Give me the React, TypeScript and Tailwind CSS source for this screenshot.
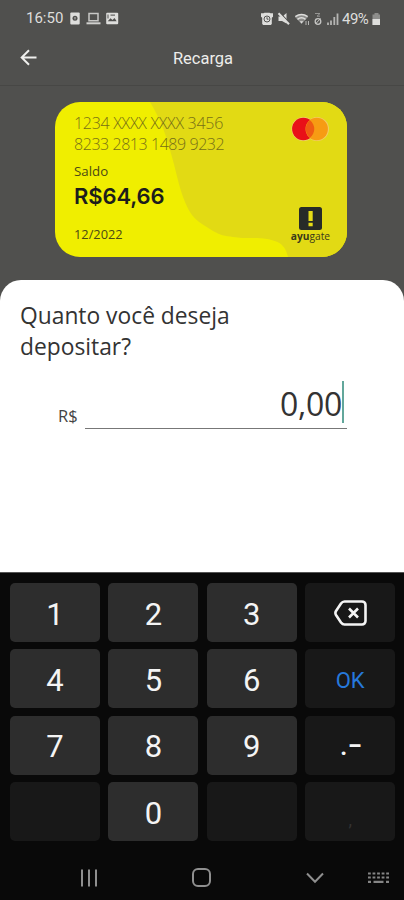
import { clsx } from "clsx";

const KEYS = [
  ["1", "2", "3", "back"],
  ["4", "5", "6", "OK"],
  ["7", "8", "9", ".–"],
  ["", "0", "", ","],
];

const StatusBar = () => (
  <div className="flex h-[37px] items-center pl-[26px] pr-[23px] text-[#dededc]">
    <span className="w-[37px] whitespace-nowrap font-['Roboto',sans-serif] text-[15px] leading-none">16:50</span>
    {/* Notifications */}
    <svg className="ml-[7px]" width="50" height="14" viewBox="0 0 50 14" fill="none">
      <rect x="0.3" y="0.5" width="9.4" height="12" rx="1" fill="currentColor" />
      <circle cx="5" cy="6.2" r="2.5" fill="#50504e" />
      <path d="M5 5v2.4" stroke="#c5c5c3" />
      <path d="M19 1.5h9v7.300h-9z" stroke="#c8c8c6" strokeWidth="1.5" />
      <path d="M16.500 11.300h14" stroke="#d0d0ce" strokeWidth="2" />
      <rect x="36.2" y="0.8" width="12" height="11.4" rx="1" fill="currentColor" />
      <path d="M37.700 9.300l2.800-3 2 1.800 2-2 2.200 3.200z" fill="#50504e" />
      <path d="M38 2.500v4M40.500 3.200h4.500" stroke="#686866" strokeWidth="1.2" />
    </svg>
    <svg className="ml-auto" width="80" height="14" viewBox="0 0 80 14" fill="none">
      {/* Alarm */}
      <path d="M0 1.300h2.500l1-.5h5l1 .5H12v3.500l-1.200 1V12l-1 1H2.200l-1-1V5.800L0 4.800z" fill="currentColor" />
      <circle cx="6" cy="7" r="3" stroke="#555553" />
      <path d="M6 5.200V7.200H7.500" stroke="#555553" />
      {/* Muted speaker */}
      <path d="M17.500 4.500h4l4-3.500v10.500L21 9h-3.500z" fill="currentColor" />
      <path d="M18.800.3l10 11.200" stroke="#50504e" strokeWidth="1.200" />
      <path d="M17.500 1.300l10.500 11" stroke="currentColor" strokeWidth="2" />
      {/* Wifi */}
      <path d="M34 5q6.500-5 13 0l-6.500 7z" fill="#8b8b89" />
      <path d="M34.300 4.700q6.200-4.500 12.400 0M36.500 7.300q4-3 8 0" stroke="#dededc" strokeWidth="1.500" />
      <path d="M38.800 9.200h3.500l-1.800 2.300z" fill="currentColor" />
      <path d="M45 9v4M47.500 9v4" stroke="#b5b5b3" />
      {/* Data */}
      <path d="M54 1.500h5l-3 2.700h3" stroke="#969694" />
      <circle cx="57" cy="9.500" r="2.800" stroke="#c5c5c3" strokeWidth="1.300" />
      <path d="M54.500 12l5-5.500" stroke="#c5c5c3" />
      {/* Signal */}
      <path d="M67 10.500V13M70 8.500V13" stroke="#c8c8c6" strokeWidth="1.500" />
      <path d="M73.300 5v8M76.500 1.500V13" stroke="#b5b5b3" strokeWidth="1.800" />
    </svg>
    <span className="ml-px w-[30px] whitespace-nowrap pt-px font-['Roboto',sans-serif] text-[15px] leading-none tracking-[-0.5px]">49%</span>
    <svg width="9" height="14" viewBox="0 0 9 14">
      <path d="M2.500 1h4v1.500H8V13H.5V2.500h2z" fill="#8e8e8c" />
      <path d="M.5 7H8V13H.5z" fill="currentColor" />
    </svg>
  </div>
);

const Card = () => (
  <div className="relative ml-[55px] h-[155px] w-[292px] overflow-hidden rounded-[25px] bg-[#f0ee00]">
    <svg className="absolute inset-0" width="292" height="155" viewBox="0 0 292 155">
      <path
        d="M95 0c9 15 15 29 20 48 6 20 9 38 15 52 4 10 9 17 17 22l11 7c7 4 12 5 20 6 12 2 24 0 34 2 10 2 18 4 21 18h59V0z"
        fill="#e2da14"
      />
    </svg>
    <div className="relative flex h-full justify-between pl-[19px] pr-[17px]">
      <div className="flex flex-col whitespace-nowrap font-['Open_Sans',sans-serif] text-[#4c4914]">
        <span className="mt-[11px] text-[16px] font-light leading-[21px] tracking-[-0.28px] text-[#777016]">1234 XXXX XXXX 3456</span>
        <span className="text-[16px] font-light leading-[21px] tracking-[-0.44px] text-[#777016]">8233 2813 1489 9232</span>
        <span className="mt-[7px] text-[13.3px] leading-[18px]">Saldo</span>
        <span className="mt-[2px] font-['Inter',sans-serif] text-[22px] font-semibold leading-[28px] tracking-[-0.1px] text-[#1c1d1b]">R$64,66</span>
        <span className="mt-[15px] text-[12.8px] leading-[18px]">12/2022</span>
      </div>
      <div className="flex flex-col items-center">
        <svg className="mt-[14px]" width="38" height="26" viewBox="0 0 38 26">
          <circle cx="12.500" cy="13" r="12" fill="#edd16c" />
          <circle cx="26" cy="13" r="12" fill="#f2cc64" />
          <circle cx="12.300" cy="13" r="11.200" fill="#e91018" />
          <circle cx="25.700" cy="13" r="11.200" fill="#f79b13" />
          <path d="M19 4.300a11 11 0 0 1 0 17.400a11 11 0 0 1 0-17.400z" fill="#ef5b12" />
        </svg>
        <svg className="mt-[65px]" width="23" height="23" viewBox="0 0 23 23">
          <rect width="23" height="23" rx="2.500" fill="#272b28" />
          <path d="M9.500 4h4.200v10H9.500z" fill="#e6dd16" />
          <path d="M9.500 15.700h4.200v3.600H9.500z" fill="#e6dd16" />
        </svg>
        <span className="font-['Open_Sans',sans-serif] text-[10.2px] leading-[13px] text-[#39391b]">
          <b>ayu</b>gate
        </span>
      </div>
    </div>
  </div>
);

const Backspace = () => (
  <svg width="33" height="26" viewBox="0 0 33 26" fill="none" stroke="#f4f4f4" strokeWidth="2.600" strokeLinejoin="round">
    <path d="M10.500 1.500H28a3.500 3.500 0 0 1 3.500 3.500v16a3.500 3.500 0 0 1-3.500 3.500H10.500Q8.500 24.500 7 22.500L2 15q-1.200-2 0-4L7 3.500Q8.500 1.500 10.500 1.500z" />
    <path d="M15 8.500l9 9M24 8.500l-9 9" />
  </svg>
);

const KeyLabel = ({ label }: { label: string }) => {
  if (label === "back") return <Backspace />;
  if (label === "OK") return <span className="pt-[4px] text-[22px] text-[#2678db]">OK</span>;
  if (label === ".–")
    return (
      <span className="flex items-baseline pt-[3px] text-[27px] font-medium">
        .<span className="ml-[1px] w-[12px] origin-left scale-x-80">–</span>
      </span>
    );
  if (label === ",") return <span className="pt-[17px] text-[18px] text-[#333]">,</span>;
  return <span className="text-[31px]">{label}</span>;
};

const Keyboard = () => (
  <div className="h-[328px] border-t border-[#555] bg-[#090909] px-[10px] pt-[10px] font-['Roboto',sans-serif] leading-none text-[#f4f4f4]">
    <div className="grid grid-cols-[90px_90px_90px_90px] grid-rows-[59px_59px_59px_59px] gap-x-[8.4px] gap-y-[7.4px]">
      {KEYS.flat().map((label, i) => (
        <button
          key={i}
          className={clsx(
            "flex items-center justify-center rounded-[5px]",
            /^\d$/.test(label) ? "bg-[#2d2d2d] pt-[3px]" : "bg-[#181818]"
          )}
        >
          <KeyLabel label={label} />
        </button>
      ))}
    </div>
    {/* Navigation bar */}
    <div className="flex h-[73px] items-center pl-[71px] text-[#8f8f8f]">
      <svg width="16" height="18" viewBox="0 0 16 18" stroke="currentColor" strokeWidth="2">
        <path d="M1 .5v17M8 .5v17M15 .5v17" />
      </svg>
      <svg className="ml-[95px]" width="19" height="19" viewBox="0 0 19 19" fill="none" stroke="currentColor" strokeWidth="2">
        <rect x="1" y="1" width="17" height="17" rx="5" />
      </svg>
      <svg className="ml-[95px]" width="18" height="12" viewBox="0 0 18 12" fill="none" stroke="currentColor" strokeWidth="2">
        <path d="M1 1.500l8 8.200 8-8.200" />
      </svg>
      <svg className="ml-[44px]" width="21" height="12" viewBox="0 0 21 12" fill="none" stroke="#858585">
        <path d="M0 1.500h21M0 5.500h21" strokeWidth="2" strokeDasharray="2.800 1.750" />
        <path d="M0 9.800h3M5.500 9.800h10M18 9.800h3" strokeWidth="2.300" />
      </svg>
    </div>
  </div>
);

const App = () => {
  return (
    <div className="flex h-[900px] w-[404px] flex-col overflow-hidden bg-[#50504e]">
      <StatusBar />
      <header className="flex h-[49px] items-center border-b border-[#474745] px-[20px] pb-[7px]">
        <svg width="17" height="17" viewBox="0 0 17 17" fill="none" stroke="#efefed" strokeWidth="2">
          <path d="M16.500 8.500H2M9 1.200L1.700 8.500 9 15.800" />
        </svg>
        <h1 className="flex-1 pr-[15px] pt-[3px] text-center font-['Roboto',sans-serif] text-[16.5px] leading-none text-[#ededeb]">Recarga</h1>
      </header>
      <div className="h-[194px] pt-[16px]">
        <Card />
      </div>
      <main className="h-[292px] rounded-t-[21px] bg-white px-[20px] pt-[20px] font-['Open_Sans',sans-serif] text-[#333]">
        <h2 className="w-[230px] text-[22.8px] leading-[31px]">Quanto você deseja depositar?</h2>
        <div className="ml-[38px] mt-[16px] flex h-[51px] w-[289px] items-end gap-[6px]">
          <span className="mb-px w-[21px] text-[16.5px] leading-[24px] text-[#444]">R$</span>
          <div className="flex h-[51px] flex-1 justify-end border-b border-[#777] pr-[3px]">
            <span className="text-[32px] leading-[51px] tracking-[-0.3px]">0,00</span>
            <span className="mt-[3px] h-[42px] w-[2px] bg-[#62a79b]" />
          </div>
        </div>
      </main>
      <Keyboard />
    </div>
  );
};

export default App;
